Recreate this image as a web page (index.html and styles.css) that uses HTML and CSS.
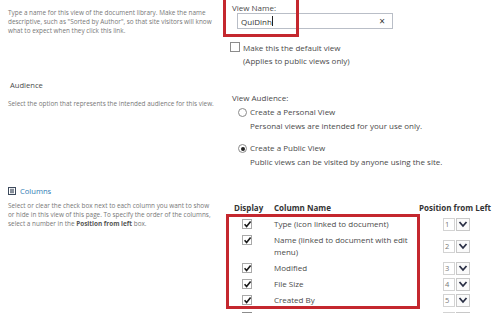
FILE: index.html
```html
<!DOCTYPE html>
<html>
<head>
<meta charset="utf-8">
<link rel="stylesheet" href="styles.css">
</head>
<body>
<div class="page">
  <section class="sec sec-name">
    <div class="left">
      <p class="desc">Type a name for this view of the document library. Make the name descriptive, such as "Sorted by Author", so that site visitors will know what to expect when they click this link.</p>
    </div>
    <div class="right">
      <div class="label">View Name:</div>
      <div class="input"><span class="val">QuiDinh</span><span class="caret"></span><span class="clear">×</span></div>
      <div class="check-opt"><span class="cb"></span><span class="opt-text">Make this the default view<br>(Applies to public views only)</span></div>
      <div class="annot annot-name"></div>
    </div>
  </section>

  <section class="sec sec-aud">
    <div class="left">
      <h3 class="head">Audience</h3>
      <p class="desc desc-aud">Select the option that represents the intended audience for this view.</p>
    </div>
    <div class="right">
      <div class="label label-aud">View Audience:</div>
      <div class="radio-opt"><span class="radio"></span><span class="opt-text">Create a Personal View<br>Personal views are intended for your use only.</span></div>
      <div class="radio-opt radio-opt2"><span class="radio on"></span><span class="opt-text">Create a Public View<br>Public views can be visited by anyone using the site.</span></div>
    </div>
  </section>

  <section class="sec sec-cols">
    <div class="left">
      <h3 class="head-link"><svg class="tog" width="8" height="8" viewBox="0 0 8 8"><rect x="0.5" y="0.5" width="7" height="7" fill="none" stroke="#3d4a5c"/><path d="M2 4H6" stroke="#3d4a5c" stroke-width="1.2"/><path d="M2 2.3H6M2 5.7H6" stroke="#3d4a5c" stroke-width="0.8"/></svg><span>Columns</span></h3>
      <p class="desc desc-cols">Select or clear the check box next to each column you want to show or hide in this view of this page. To specify the order of the columns, select a number in the <b>Position from left</b> box.</p>
    </div>
    <div class="right">
      <div class="tbl">
        <div class="th th-disp">Display</div>
        <div class="th th-name">Column Name</div>
        <div class="th th-pos">Position from Left</div>

        <div class="td td-cb"><span class="cb on"><svg viewBox="0 0 9 9" width="9" height="9"><path d="M1.6 4.3L3.6 6.6L7.6 1.6" fill="none" stroke="#1b1b1b" stroke-width="1.6"/></svg></span></div>
        <div class="td td-name">Type (icon linked to document)</div>
        <div class="td td-pos"><span class="sel"><span class="num">1</span><span class="arr"><svg viewBox="0 0 10 8" width="10" height="8"><path d="M1.5 2L5 6L8.5 2" fill="none" stroke="#2a2f45" stroke-width="1.8"/></svg></span></span></div>

        <div class="td td-cb tall"><span class="cb on"><svg viewBox="0 0 9 9" width="9" height="9"><path d="M1.6 4.3L3.6 6.6L7.6 1.6" fill="none" stroke="#1b1b1b" stroke-width="1.6"/></svg></span></div>
        <div class="td td-name tall">Name (linked to document with edit menu)</div>
        <div class="td td-pos tall"><span class="sel"><span class="num">2</span><span class="arr"><svg viewBox="0 0 10 8" width="10" height="8"><path d="M1.5 2L5 6L8.5 2" fill="none" stroke="#2a2f45" stroke-width="1.8"/></svg></span></span></div>

        <div class="td td-cb"><span class="cb on"><svg viewBox="0 0 9 9" width="9" height="9"><path d="M1.6 4.3L3.6 6.6L7.6 1.6" fill="none" stroke="#1b1b1b" stroke-width="1.6"/></svg></span></div>
        <div class="td td-name">Modified</div>
        <div class="td td-pos"><span class="sel"><span class="num">3</span><span class="arr"><svg viewBox="0 0 10 8" width="10" height="8"><path d="M1.5 2L5 6L8.5 2" fill="none" stroke="#2a2f45" stroke-width="1.8"/></svg></span></span></div>

        <div class="td td-cb"><span class="cb on"><svg viewBox="0 0 9 9" width="9" height="9"><path d="M1.6 4.3L3.6 6.6L7.6 1.6" fill="none" stroke="#1b1b1b" stroke-width="1.6"/></svg></span></div>
        <div class="td td-name">File Size</div>
        <div class="td td-pos"><span class="sel"><span class="num">4</span><span class="arr"><svg viewBox="0 0 10 8" width="10" height="8"><path d="M1.5 2L5 6L8.5 2" fill="none" stroke="#2a2f45" stroke-width="1.8"/></svg></span></span></div>

        <div class="td td-cb"><span class="cb on"><svg viewBox="0 0 9 9" width="9" height="9"><path d="M1.6 4.3L3.6 6.6L7.6 1.6" fill="none" stroke="#1b1b1b" stroke-width="1.6"/></svg></span></div>
        <div class="td td-name">Created By</div>
        <div class="td td-pos"><span class="sel"><span class="num">5</span><span class="arr"><svg viewBox="0 0 10 8" width="10" height="8"><path d="M1.5 2L5 6L8.5 2" fill="none" stroke="#2a2f45" stroke-width="1.8"/></svg></span></span></div>

        <div class="td td-cb td-last"><span class="cb"></span></div>
        <div class="td td-name td-last"></div>
        <div class="td td-pos td-last"><span class="sel"><span class="num"></span><span class="arr"></span></span></div>

        <div class="annot annot-cols"></div>
      </div>
    </div>
  </section>
</div>
</body>
</html>
```

FILE: styles.css
```css
html, body {
  margin: 0;
  padding: 0;
  background: #ffffff;
  overflow: hidden;
}
body {
  width: 503px;
  height: 313px;
  font-family: "Open Sans", "Noto Sans", sans-serif;
  color: #444444;
}
.page {
  padding: 3px 0 0 0;
}
.sec {
  display: grid;
  grid-template-columns: 222px 281px;
}
.left {
  padding-left: 8px;
  padding-right: 6px;
}
.right {
  position: relative;
  padding-left: 8px;
}
p, h3 { margin: 0; }
.desc {
  font-size: 6.4px;
  line-height: 9px;
  color: #777777;
}
.sec-name .desc { margin-top: 5px; }
.label {
  font-size: 8px;
  line-height: 10px;
  color: #4a4a4a;
  padding-left: 2px;
}
.input {
  margin-top: 0;
  margin-left: 7px;
  width: 151px;
  height: 14px;
  border: 1px solid #b9bec7;
  display: flex;
  align-items: center;
  font-size: 8px;
  color: #333;
  padding-left: 3px;
  box-sizing: content-box;
}
.caret {
  width: 1px;
  height: 10px;
  background: #222;
  margin-left: 0.5px;
}
.clear {
  margin-left: auto;
  margin-right: 7px;
  font-size: 10px;
  color: #333;
  line-height: 10px;
}
.check-opt {
  margin-top: 12px;
  display: flex;
  align-items: flex-start;
}
.opt-text {
  font-size: 8px;
  line-height: 13px;
  color: #4a4a4a;
}
.check-opt .cb {
  margin-top: 1px;
  margin-right: 3px;
}
.cb {
  width: 8px;
  height: 8px;
  border: 1px solid #8c8c8c;
  display: inline-flex;
  background: #fff;
  flex: none;
}
.cb svg { display: block; margin: -0.5px; }
.cb.on { border-color: #a9a9a9; }

.annot {
  position: absolute;
  border: 3px solid #c4272e;
  box-sizing: border-box;
  pointer-events: none;
}
.annot-name {
  left: 1px;
  top: -10px;
  width: 76px;
  height: 44px;
}

.head {
  font-size: 7.6px;
  line-height: 12px;
  font-weight: normal;
  color: #4a4a4a;
  margin-top: 12px;
  padding-left: 2px;
}
.desc-aud { margin-top: 8px; }
.label-aud { margin-top: 25px; line-height: 11px; }
.radio-opt {
  display: flex;
  align-items: flex-start;
  margin-top: 2px;
  padding-left: 8px;
}
.radio-opt .opt-text { line-height: 14px; }
.radio-opt2 { margin-top: 8px; }
.radio {
  width: 7px;
  height: 7px;
  border: 1px solid #8a8a8a;
  border-radius: 50%;
  margin-top: 3px;
  margin-right: 3px;
  flex: none;
  box-sizing: content-box;
  position: relative;
}
.radio.on::after {
  content: "";
  position: absolute;
  left: 1.5px;
  top: 1.5px;
  width: 4px;
  height: 4px;
  border-radius: 50%;
  background: #222;
}

.head-link {
  margin-top: 16px;
  font-size: 7.6px;
  line-height: 12px;
  font-weight: normal;
  color: #2e7cb4;
  display: flex;
  align-items: center;
}
.tog { margin-right: 4px; }
.desc-cols { margin-top: 4px; }
.desc b { color: #555; font-weight: 700; }

.tbl {
  margin-top: 33px;
  position: relative;
  display: grid;
  grid-template-columns: 40px 145px 88px;
  grid-template-rows: 14px 16px 28px 16px 16px 16px 16px;
  font-size: 8px;
  color: #4a4a4a;
}
.th {
  font-weight: 700;
  color: #333;
  line-height: 12px;
  font-size: 8px;
}
.th-disp { padding-left: 4px; }
.th-name { padding-left: 4px; }
.th-pos { padding-left: 4px; white-space: nowrap; }
.td {
  display: flex;
  align-items: center;
  line-height: 12px;
}
.td-cb { padding-left: 12px; }
.td-cb.tall { align-items: flex-start; padding-top: 3px; }
.td-name { padding-left: 4px; padding-right: 2px; }
.td-pos { padding-left: 28px; }
.td-last { align-items: flex-start; padding-top: 4px; }
.sel {
  display: inline-flex;
  height: 13px;
}
.num {
  width: 9px;
  border: 1px solid #d3d3d3;
  font-size: 7.5px;
  line-height: 11px;
  color: #777;
  padding-left: 1px;
  box-sizing: content-box;
}
.arr {
  width: 12px;
  margin-left: 1px;
  border: 1px solid #c8c8c8;
  display: flex;
  align-items: center;
  justify-content: center;
  background: #fafafa;
}
.annot-cols {
  left: -4px;
  top: 12px;
  width: 194px;
  height: 95px;
}
```
